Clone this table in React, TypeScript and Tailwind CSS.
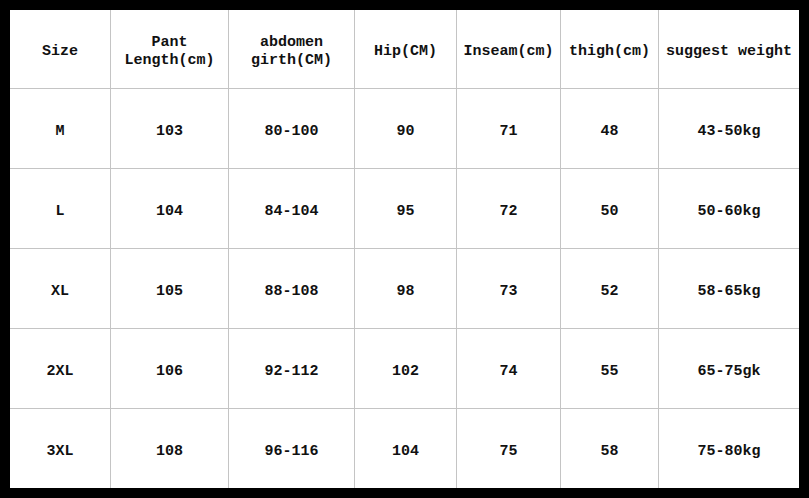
import React from "react";

const headers: string[][] = [
  ["Size"],
  ["Pant", "Length(cm)"],
  ["abdomen", "girth(CM)"],
  ["Hip(CM)"],
  ["Inseam(cm)"],
  ["thigh(cm)"],
  ["suggest weight"],
];

const rows: string[][] = [
  ["M", "103", "80-100", "90", "71", "48", "43-50kg"],
  ["L", "104", "84-104", "95", "72", "50", "50-60kg"],
  ["XL", "105", "88-108", "98", "73", "52", "58-65kg"],
  ["2XL", "106", "92-112", "102", "74", "55", "65-75gk"],
  ["3XL", "108", "96-116", "104", "75", "58", "75-80kg"],
];

export default function App() {
  return (
    <div className="w-[809px] h-[498px] bg-black p-[10px]">
      <div
        className="grid grid-cols-[100px_117px_125px_101px_103px_97px_140px] grid-rows-[78px_repeat(5,79px)] gap-px bg-[#c4c4c4] text-[15px] leading-[18px] font-bold text-[#111]"
        style={{ fontFamily: '"Liberation Mono", monospace' }}
      >
        {headers.map((h, i) => (
          <div key={i} className="bg-white flex flex-col items-center justify-center text-center pt-[6px]">
            {h.map((line, j) => (
              <span key={j}>{line}</span>
            ))}
          </div>
        ))}
        {rows.map((r, ri) =>
          r.map((cell, ci) => (
            <div key={ri + "-" + ci} className="bg-white flex items-center justify-center pt-[6px]">
              {cell}
            </div>
          ))
        )}
      </div>
    </div>
  );
}
